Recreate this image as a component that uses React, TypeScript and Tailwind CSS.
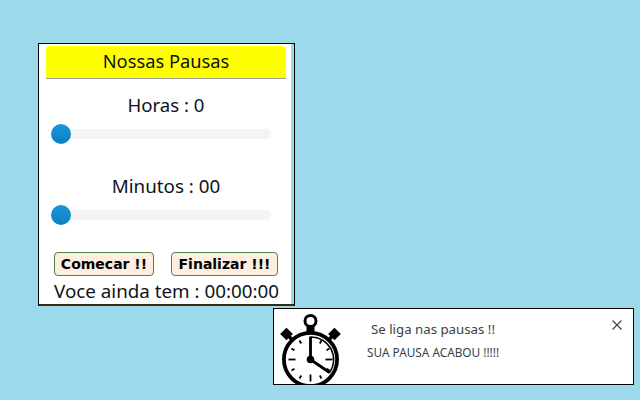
import React from "react";

const ticks = [30, 60, 90, 120, 150, 180, 210, 240, 270, 300, 330];

const Stopwatch = () => (
  <svg width="64" height="76" viewBox="0 0 64 76" className="block">
    <circle cx="31.5" cy="9" r="5.5" fill="none" stroke="#000" strokeWidth="3" />
    <rect x="27.5" y="13" width="8" height="7" fill="#000" />
    <rect x="3" y="17.5" width="9" height="9" fill="#000" transform="rotate(-45 7.5 22)" />
    <rect x="51" y="17.5" width="9" height="9" fill="#000" transform="rotate(45 55.5 22)" />
    <line x1="7.5" y1="22" x2="13.5" y2="28" stroke="#000" strokeWidth="3.5" />
    <line x1="55.5" y1="22" x2="49.5" y2="28" stroke="#000" strokeWidth="3.5" />
    <circle cx="31.5" cy="47.5" r="26.6" fill="#fff" stroke="#000" strokeWidth="3.8" />
    <path d="M31.5 47.5 L31.5 25 A22.5 22.5 0 0 1 50.5 60.5 Z" fill="#fff" stroke="#000" strokeWidth="1.5" />
    {ticks.map((a) => (
      <line
        key={a}
        x1="31.5"
        y1="25.5"
        x2="31.5"
        y2={a % 90 === 0 ? 32.5 : 29}
        stroke="#000"
        strokeWidth="1.8"
        transform={`rotate(${a} 31.5 47.5)`}
      />
    ))}
    <line x1="31.5" y1="47.5" x2="31.5" y2="25" stroke="#000" strokeWidth="2.8" />
    <line x1="31.5" y1="47.5" x2="50.5" y2="60.5" stroke="#000" strokeWidth="2.8" />
    <circle cx="31.5" cy="47.5" r="3.8" fill="#000" />
  </svg>
);

const Slider = () => (
  <div className="relative h-[10px] w-[219px] ml-[6px] rounded-[5px] bg-[#f4f4f4]">
    <div className="absolute left-[-1px] top-[-5px] w-5 h-5 rounded-full bg-linear-to-b from-[#1b97da] to-[#0a7fc2]" />
  </div>
);

export default function App() {
  return (
    <div className="relative w-[640px] h-[400px] overflow-hidden bg-[#9bd9eb] font-['Noto_Sans','Open_Sans',sans-serif] text-[#10131a]">
      <div className="absolute left-[38px] top-[43px] w-[257px] h-[263px] border border-black border-b-2 border-b-[#3a2a10]">
        <div className="w-[252px] h-full bg-white pl-[7px] pr-[5px] pt-[2px]">
          <div className="h-[33px] bg-[#ffff00] rounded-t-[4px] border-b border-[#999] text-center text-[18.3px] leading-[30px]">
            Nossas Pausas
          </div>
          <p className="mt-[13px] text-center text-[18.6px] leading-[26px]">Horas : 0</p>
          <div className="mt-[11px]">
            <Slider />
          </div>
          <p className="mt-[34px] text-center text-[18.8px] leading-[26px]">Minutos : 00</p>
          <div className="mt-[11px]">
            <Slider />
          </div>
          <div className="mt-[32px] ml-[8px] flex gap-[17px]">
            <button className="w-[100px] h-[24px] rounded-[4px] border border-[#4f7f4f] bg-[#fdeee0] font-['DejaVu_Sans',sans-serif] text-[14px] font-bold leading-none text-black">
              Comecar !!
            </button>
            <button className="w-[107px] h-[24px] rounded-[4px] border border-[#4f7f4f] bg-[#fdeee0] font-['DejaVu_Sans',sans-serif] text-[14px] font-bold leading-none text-black">
              Finalizar !!!
            </button>
          </div>
          <p className="ml-[8px] text-[18.8px] leading-[30px] whitespace-nowrap">Voce ainda tem : 00:00:00</p>
        </div>
      </div>

      <div className="absolute left-[273px] top-[308px] w-[361px] h-[77px] bg-white border border-black overflow-hidden flex">
        <div className="w-[71px] pl-[5px] pt-[3px] shrink-0">
          <Stopwatch />
        </div>
        <div className="pl-[22px] pt-[10px] text-[#3a3f47]">
          <p className="text-[13.25px] leading-[20px] pl-[4px]">Se liga nas pausas !!</p>
          <p className="mt-[5px] text-[11.8px] leading-[16px]">SUA PAUSA ACABOU !!!!!</p>
        </div>
        <span className="absolute right-[10px] top-[10px]">
          <svg width="12" height="12" viewBox="0 0 12 12" className="block">
            <path d="M1.5 1.5 L10.5 10.5 M10.5 1.5 L1.5 10.5" stroke="#444" strokeWidth="1.2" fill="none" />
          </svg>
        </span>
      </div>
    </div>
  );
}
